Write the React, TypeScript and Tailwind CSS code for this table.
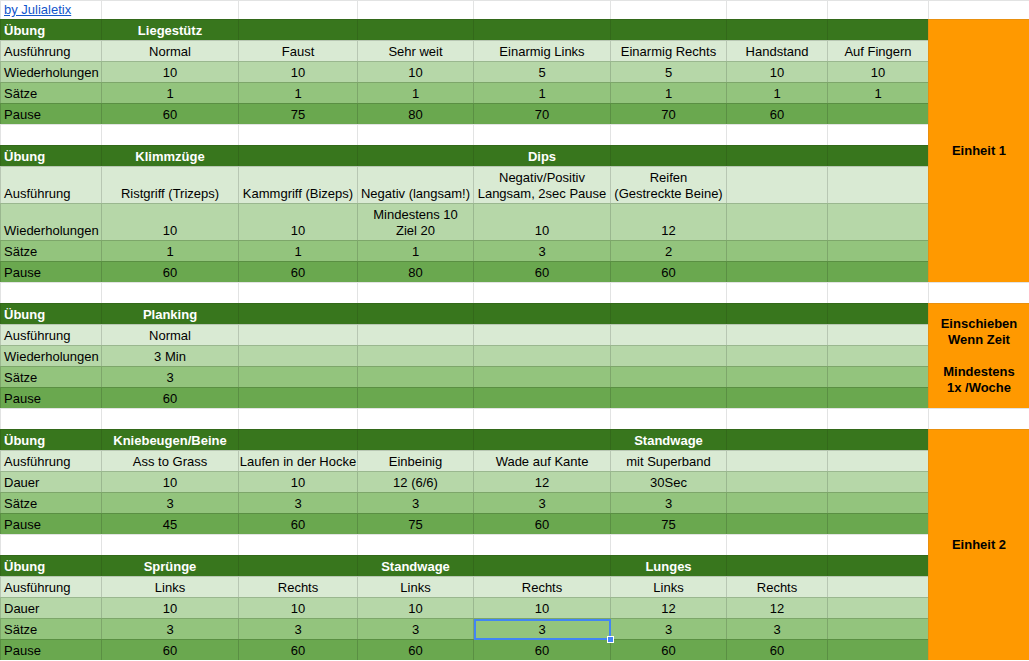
import React from "react";

type Kind = "link" | "blank" | "h" | "a" | "b" | "c" | "d";
type Row = { k: Kind; c: string[]; i?: boolean };

const E = "";
const rows: Row[] = [
  { k: "link", c: ["by Julialetix", E, E, E, E, E, E, E], i: true },
  // Table 1
  { k: "h", c: ["Übung", "Liegestütz", E, E, E, E, E, E] },
  { k: "a", c: ["Ausführung", "Normal", "Faust", "Sehr weit", "Einarmig Links", "Einarmig Rechts", "Handstand", "Auf Fingern"] },
  { k: "b", c: ["Wiederholungen", "10", "10", "10", "5", "5", "10", "10"] },
  { k: "c", c: ["Sätze", "1", "1", "1", "1", "1", "1", "1"] },
  { k: "d", c: ["Pause", "60", "75", "80", "70", "70", "60", E] },
  { k: "blank", c: [E, E, E, E, E, E, E, E] },
  // Table 2
  { k: "h", c: ["Übung", "Klimmzüge", E, E, "Dips", E, E, E] },
  { k: "a", c: ["Ausführung", "Ristgriff (Trizeps)", "Kammgriff (Bizeps)", "Negativ (langsam!)", "Negativ/Positiv\nLangsam, 2sec Pause", "Reifen\n(Gestreckte Beine)", E, E] },
  { k: "b", c: ["Wiederholungen", "10", "10", "Mindestens 10\nZiel 20", "10", "12", E, E] },
  { k: "c", c: ["Sätze", "1", "1", "1", "3", "2", E, E] },
  { k: "d", c: ["Pause", "60", "60", "80", "60", "60", E, E] },
  { k: "blank", c: [E, E, E, E, E, E, E, E], i: true },
  // Table 3
  { k: "h", c: ["Übung", "Planking", E, E, E, E, E, E] },
  { k: "a", c: ["Ausführung", "Normal", E, E, E, E, E, E] },
  { k: "b", c: ["Wiederholungen", "3 Min", E, E, E, E, E, E] },
  { k: "c", c: ["Sätze", "3", E, E, E, E, E, E] },
  { k: "d", c: ["Pause", "60", E, E, E, E, E, E] },
  { k: "blank", c: [E, E, E, E, E, E, E, E], i: true },
  // Table 4
  { k: "h", c: ["Übung", "Kniebeugen/Beine", E, E, E, "Standwage", E, E] },
  { k: "a", c: ["Ausführung", "Ass to Grass", "Laufen in der Hocke", "Einbeinig", "Wade auf Kante", "mit Superband", E, E] },
  { k: "b", c: ["Dauer", "10", "10", "12 (6/6)", "12", "30Sec", E, E] },
  { k: "c", c: ["Sätze", "3", "3", "3", "3", "3", E, E] },
  { k: "d", c: ["Pause", "45", "60", "75", "60", "75", E, E] },
  { k: "blank", c: [E, E, E, E, E, E, E, E] },
  // Table 5
  { k: "h", c: ["Übung", "Sprünge", E, "Standwage", E, "Lunges", E, E] },
  { k: "a", c: ["Ausführung", "Links", "Rechts", "Links", "Rechts", "Links", "Rechts", E] },
  { k: "b", c: ["Dauer", "10", "10", "10", "10", "12", "12", E] },
  { k: "c", c: ["Sätze", "3", "3", "3", "3", "3", "3", E] },
  { k: "d", c: ["Pause", "60", "60", "60", "60", "60", "60", E] },
];

const kindClass: Record<Kind, string> = {
  link: "bg-white border-[#e2e3e3]",
  blank: "bg-white border-[#e2e3e3]",
  h: "bg-[#38761d] border-[#33691a] text-white font-bold",
  a: "bg-[#d9ead3] border-[#00000026]",
  b: "bg-[#b6d7a8] border-[#00000026]",
  c: "bg-[#93c47d] border-[#00000026]",
  d: "bg-[#6aa84f] border-[#00000026]",
};

function Cell({ kind, text, col, selected }: { kind: Kind; text: string; col: number; selected?: boolean }) {
  const align = col === 0 ? "justify-start pl-[3px] text-left" : "justify-center text-center";
  return (
    <div
      className={`relative flex items-end border-l border-t pb-[1px] leading-[16px] whitespace-pre ${align} ${kindClass[kind]}`}
    >
      {kind === "link" && col === 0 ? (
        <span className="text-[#1155cc] underline">{text}</span>
      ) : (
        <span>{text}</span>
      )}
      {selected && (
        <>
          <div className="absolute left-0 top-0 right-[-1px] bottom-[-1px] z-10 border-2 border-[#4285f4]" />
          <div className="absolute right-[-4px] bottom-[-4px] z-20 w-[7px] h-[7px] bg-[#4285f4] border border-white" />
        </>
      )}
    </div>
  );
}

export default function App() {
  return (
    <div className="w-[1029px] h-[661px] overflow-hidden bg-white font-['Liberation_Sans',Arial,sans-serif] text-[13px] text-black">
      <div className="grid grid-cols-[101px_137px_119px_116px_137px_116px_101px_101px_101px] grid-rows-[19px_repeat(7,21px)_repeat(2,37px)_repeat(21,21px)]">
        {rows.map((r, ri) => (
          <React.Fragment key={ri}>
            {r.c.map((t, ci) => (
              <Cell key={ci} kind={r.k} text={t} col={ci} selected={ri === 28 && ci === 4} />
            ))}
            {r.i && <div className="border-l border-t border-[#e2e3e3] bg-white" />}
          </React.Fragment>
        ))}
        <div className="col-start-9 row-start-2 row-span-11 flex items-center justify-center bg-[#ff9900] border-l border-t border-[#e8900f] font-bold leading-[16px] text-center whitespace-pre">
          Einheit 1
        </div>
        <div className="col-start-9 row-start-14 row-span-5 flex items-center justify-center bg-[#ff9900] border-l border-t border-[#e8900f] font-bold leading-[16px] text-center whitespace-pre">
          {"Einschieben\nWenn Zeit\n\nMindestens\n1x /Woche"}
        </div>
        <div className="col-start-9 row-start-20 row-span-11 flex items-center justify-center bg-[#ff9900] border-l border-t border-[#e8900f] font-bold leading-[16px] text-center whitespace-pre">
          Einheit 2
        </div>
      </div>
    </div>
  );
}
